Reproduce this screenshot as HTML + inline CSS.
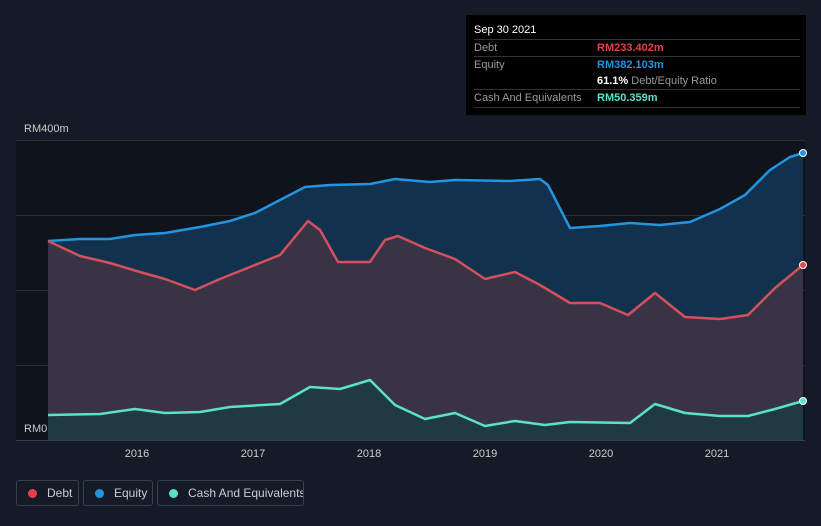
<!DOCTYPE html>
<html><head><meta charset="utf-8"><style>
body{margin:0;background:#151b26;width:821px;height:526px;overflow:hidden;font-family:"Liberation Sans",sans-serif;position:relative}
.tt{position:absolute;left:466px;top:15px;width:340px;height:100px;background:#000;color:#fff;font-size:11px}
.tt .r{position:absolute;left:8px;right:6px;height:17px;border-top:1px solid #333;line-height:17px}
.lg{position:absolute;top:480px;height:26px;border:1px solid #3a404b;border-radius:3px;color:#c9ccd1;font-size:12px;line-height:25px;box-sizing:border-box;white-space:nowrap;overflow:hidden}
.lg i{display:inline-block;width:9px;height:9px;border-radius:50%;margin:0 10px 0 11px;vertical-align:-1px}
</style></head><body>
<svg width="821" height="526" style="position:absolute;left:0;top:0">
<rect x="16" y="140" width="789" height="300" fill="#0f131b"/>
<g stroke="#2a2f38" stroke-width="1">
<line x1="16" y1="140.5" x2="805" y2="140.5"/><line x1="16" y1="215.5" x2="805" y2="215.5"/><line x1="16" y1="290.5" x2="805" y2="290.5"/><line x1="16" y1="365.5" x2="805" y2="365.5"/><line x1="16" y1="440.5" x2="805" y2="440.5" stroke="#3a3f48"/></g>
<polygon fill="#11314d" points="48,241 80,239 110,239 135,235 165,233 200,227 230,221 255,213 280,200 305,187 330,185 370,184 395,179 430,182 455,180 510,181 540,179 548,185 570,228 600,226 630,223 660,225 690,222 720,209 745,195 770,170 790,157 803,153 803,440 48,440"/>
<polygon fill="#383345" points="48,241 80,256 110,263 140,272 165,279 195,290 220,279 250,267 280,255 308,221 320,230 338,262 370,262 385,240 398,236 425,248 455,259 485,279 515,272 540,285 570,303 600,303 628,315 655,293 685,317 720,319 748,315 775,288 803,265 803,440 48,440"/>
<polygon fill="#1f3a40" points="48,415 100,414 135,409 165,413 200,412 230,407 280,404 310,387 340,389 370,380 395,405 425,419 455,413 485,426 515,421 545,425 570,422 630,423 655,404 685,413 720,416 748,416 775,409 803,401 803,440 48,440"/>
<g fill="none" stroke-width="2.5" stroke-linejoin="round">
<polyline stroke="#2394df" points="48,241 80,239 110,239 135,235 165,233 200,227 230,221 255,213 280,200 305,187 330,185 370,184 395,179 430,182 455,180 510,181 540,179 548,185 570,228 600,226 630,223 660,225 690,222 720,209 745,195 770,170 790,157 803,153"/>
<polyline stroke="#d4505f" points="48,241 80,256 110,263 140,272 165,279 195,290 220,279 250,267 280,255 308,221 320,230 338,262 370,262 385,240 398,236 425,248 455,259 485,279 515,272 540,285 570,303 600,303 628,315 655,293 685,317 720,319 748,315 775,288 803,265"/>
<polyline stroke="#5ce0cc" points="48,415 100,414 135,409 165,413 200,412 230,407 280,404 310,387 340,389 370,380 395,405 425,419 455,413 485,426 515,421 545,425 570,422 630,423 655,404 685,413 720,416 748,416 775,409 803,401"/>
</g>
<circle cx="803" cy="153" r="3.5" fill="#2394df" stroke="#fff" stroke-width="1"/>
<circle cx="803" cy="265" r="3.5" fill="#e04a55" stroke="#fff" stroke-width="1"/>
<circle cx="803" cy="401" r="3.5" fill="#5ce0cc" stroke="#fff" stroke-width="1"/>
<g fill="#c9ccd1" font-size="11" font-family="Liberation Sans">
<text x="24" y="132">RM400m</text><text x="24" y="432">RM0</text>
<g text-anchor="middle"><text x="137" y="457">2016</text><text x="253" y="457">2017</text><text x="369" y="457">2018</text><text x="485" y="457">2019</text><text x="601" y="457">2020</text><text x="717" y="457">2021</text></g></g>
</svg>
<div class="tt">
<div style="position:absolute;left:8px;top:9px;font-size:11px">Sep 30 2021</div>
<div class="r" style="top:24px"><span style="color:#999">Debt</span><span style="position:absolute;left:123px;color:#e5404a;font-weight:bold">RM233.402m</span></div>
<div class="r" style="top:41px"><span style="color:#999">Equity</span><span style="position:absolute;left:123px;color:#2394df;font-weight:bold">RM382.103m</span></div>
<div class="r" style="top:58px;border-top:none"><span style="position:absolute;left:123px"><b>61.1%</b> <span style="color:#999">Debt/Equity Ratio</span></span></div>
<div class="r" style="top:74px"><span style="color:#999">Cash And Equivalents</span><span style="position:absolute;left:123px;color:#5ce0cc;font-weight:bold">RM50.359m</span></div>
<div class="r" style="top:92px;height:0"></div>
</div>
<div class="lg" style="left:16px;width:63px"><i style="background:#e5404a"></i>Debt</div>
<div class="lg" style="left:83px;width:70px"><i style="background:#2394df"></i>Equity</div>
<div class="lg" style="left:157px;width:147px"><i style="background:#5ce0cc"></i>Cash And Equivalents</div>
</body></html>
